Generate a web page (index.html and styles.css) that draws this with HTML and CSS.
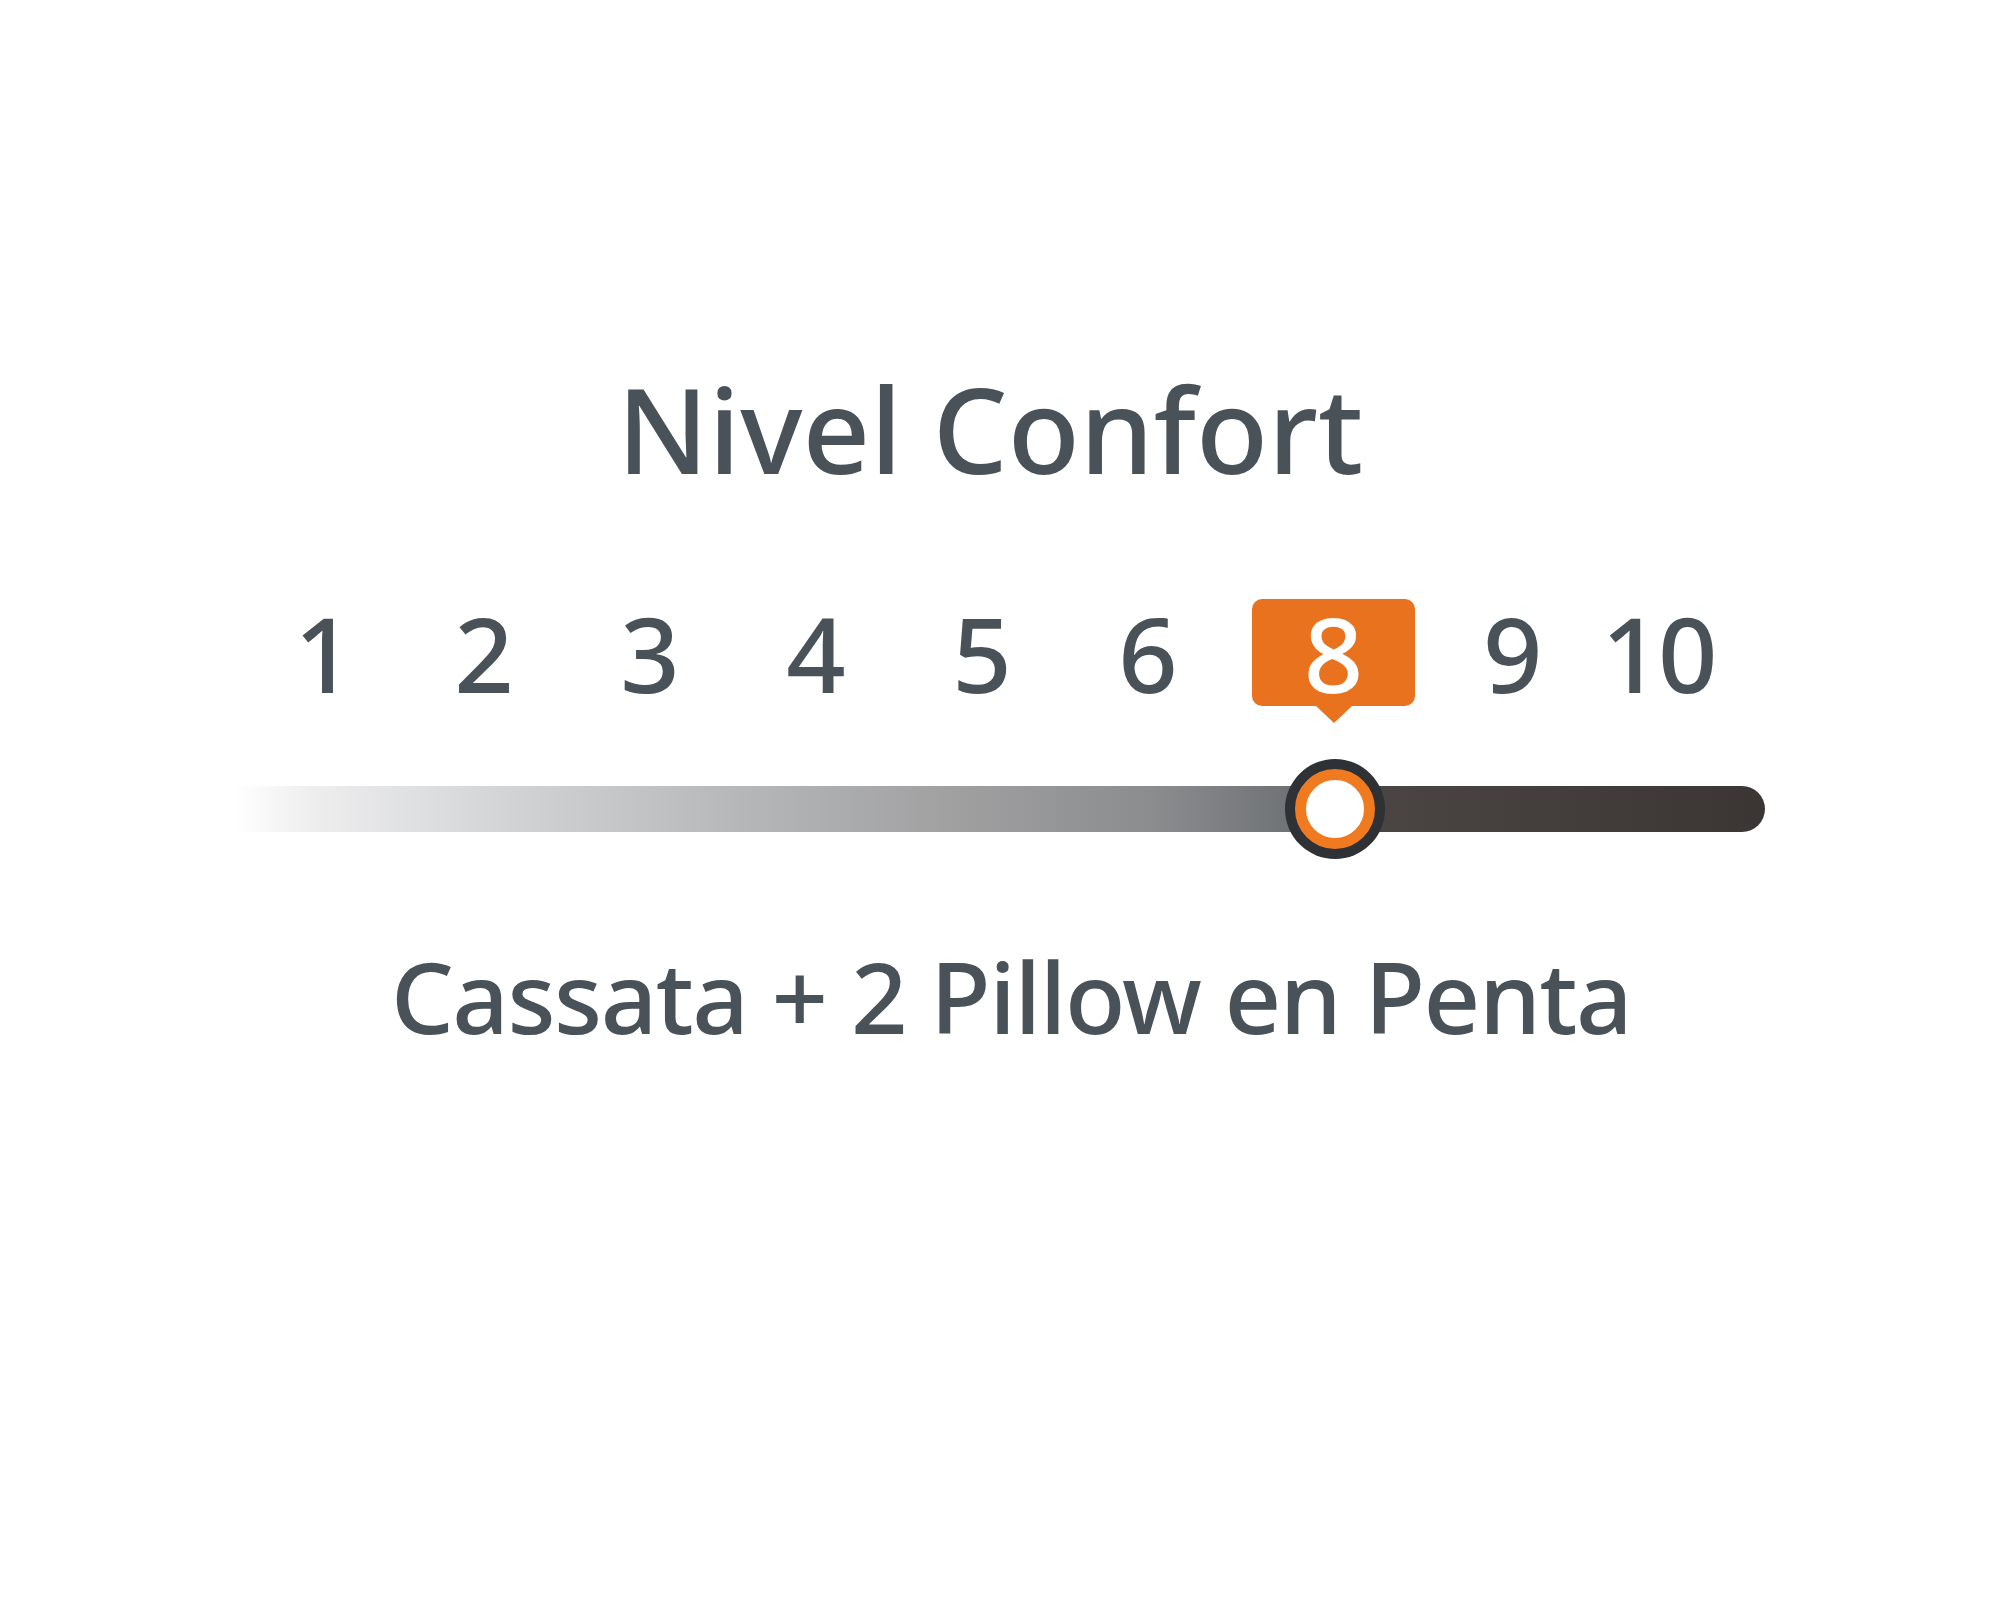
FILE: index.html
```html
<!DOCTYPE html>
<html lang="es">
<head>
  <meta charset="UTF-8">
  <title>Nivel Confort</title>
  <link rel="stylesheet" href="styles.css">
</head>
<body>

  <main class="comfort">
    <h1 class="comfort-title">Nivel Confort</h1>

    <div class="scale">
      <ol class="scale-numbers">
        <li class="num num-one">1</li>
        <li class="num">2</li>
        <li class="num">3</li>
        <li class="num">4</li>
        <li class="num">5</li>
        <li class="num">6</li>
        <li class="badge">8</li>
        <li class="num num-nine">9</li>
        <li class="num num-ten">10</li>
      </ol>

      <div class="track">
        <span class="knob" style="left: 71.9%"></span>
      </div>
    </div>

    <p class="comfort-model">Cassata + 2 Pillow en Penta</p>
  </main>

</body>
</html>
```

FILE: styles.css
```css
body {
  margin: 0;
  padding: 0;
  background: #ffffff;
  font-family: 'Noto Sans', 'Open Sans', sans-serif;
  font-weight: 500;
  color: #4a5259;
}
.comfort {
  width: 100%;
  padding-top: 370px;
  display: flex;
  flex-direction: column;
  align-items: center;
}
.comfort-title {
  margin: 0;
  font-size: 118px;
  font-weight: 500;
  line-height: 1;
  padding-right: 20px;
}
.scale {
  width: 1530px;
  margin-top: 111px;
}
.scale-numbers {
  list-style: none;
  margin: 0;
  padding: 0;
  display: flex;
  align-items: center;
  height: 107px;
  font-size: 104px;
  line-height: 1;
}
.num {
  width: 166px;
  text-align: center;
}
.num-one {
  padding-left: 12px;
  width: 154px;
}
.num-nine {
  width: 59px;
  margin-left: 68px;
}
.num-ten {
  width: 118px;
  margin-left: 57px;
  letter-spacing: -3px;
}
.badge {
  position: relative;
  width: 163px;
  height: 107px;
  margin-left: 21px;
  background: #e9721f;
  border-radius: 10px;
  color: #ffffff;
  display: flex;
  align-items: center;
  justify-content: center;
}
.badge::after {
  content: "";
  position: absolute;
  left: 50%;
  bottom: -17px;
  margin-left: -18px;
  border-left: 18px solid transparent;
  border-right: 18px solid transparent;
  border-top: 17px solid #e9721f;
}
.track {
  position: relative;
  height: 46px;
  margin-top: 80px;
  border-radius: 0 23px 23px 0;
  background: linear-gradient(to right,
    rgba(255,255,255,0) 0%,
    #eeeeef 5%,
    #d4d5d7 17%,
    #b6b7b9 33%,
    #a0a0a1 47%,
    #8b8c8e 60%,
    #6c7073 70%,
    #4c4745 72%,
    #3b3634 100%);
}
.knob {
  position: absolute;
  top: 50%;
  width: 58px;
  height: 58px;
  margin: -40px 0 0 -40px;
  background: #ffffff;
  border: 11px solid #f07a1f;
  border-radius: 50%;
  box-shadow: 0 0 0 10px #2e3135;
}
.comfort-model {
  margin: 114px 0 0;
  font-size: 99px;
  font-weight: 500;
  line-height: 1;
  letter-spacing: -1.5px;
  padding-left: 22px;
}
```
